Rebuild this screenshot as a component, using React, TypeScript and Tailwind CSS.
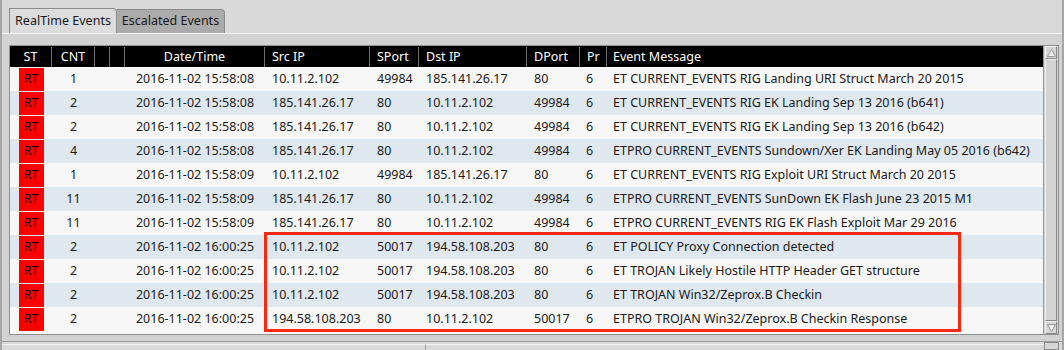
const rows = [
  ['1', '2016-11-02 15:58:08', '10.11.2.102', '49984', '185.141.26.17', '80', '6', 'ET CURRENT_EVENTS RIG Landing URI Struct March 20 2015'],
  ['2', '2016-11-02 15:58:08', '185.141.26.17', '80', '10.11.2.102', '49984', '6', 'ET CURRENT_EVENTS RIG EK Landing Sep 13 2016 (b641)'],
  ['2', '2016-11-02 15:58:08', '185.141.26.17', '80', '10.11.2.102', '49984', '6', 'ET CURRENT_EVENTS RIG EK Landing Sep 13 2016 (b642)'],
  ['4', '2016-11-02 15:58:08', '185.141.26.17', '80', '10.11.2.102', '49984', '6', 'ETPRO CURRENT_EVENTS Sundown/Xer EK Landing May 05 2016 (b642)'],
  ['1', '2016-11-02 15:58:09', '10.11.2.102', '49984', '185.141.26.17', '80', '6', 'ET CURRENT_EVENTS RIG Exploit URI Struct March 20 2015'],
  ['11', '2016-11-02 15:58:09', '185.141.26.17', '80', '10.11.2.102', '49984', '6', 'ETPRO CURRENT_EVENTS SunDown EK Flash June 23 2015 M1'],
  ['11', '2016-11-02 15:58:09', '185.141.26.17', '80', '10.11.2.102', '49984', '6', 'ETPRO CURRENT_EVENTS RIG EK Flash Exploit Mar 29 2016'],
  ['2', '2016-11-02 16:00:25', '10.11.2.102', '50017', '194.58.108.203', '80', '6', 'ET POLICY Proxy Connection detected'],
  ['2', '2016-11-02 16:00:25', '10.11.2.102', '50017', '194.58.108.203', '80', '6', 'ET TROJAN Likely Hostile HTTP Header GET structure'],
  ['2', '2016-11-02 16:00:25', '10.11.2.102', '50017', '194.58.108.203', '80', '6', 'ET TROJAN Win32/Zeprox.B Checkin'],
  ['2', '2016-11-02 16:00:25', '194.58.108.203', '80', '10.11.2.102', '50017', '6', 'ETPRO TROJAN Win32/Zeprox.B Checkin Response'],
];

const cols = 'grid grid-cols-[42px_43px_14px_16px_140px_105px_49px_108px_53px_27px_1fr]';

function HeaderCell({ children, center }: { children?: React.ReactNode; center?: boolean }) {
  return (
    <div className={`h-full flex items-center border-r border-[#6e6e6e] ${center ? 'justify-center' : 'px-[7px]'}`}>
      {children}
    </div>
  );
}

export default function App() {
  return (
    <div
      className="w-[1064px] h-[350px] overflow-hidden bg-[#d9d9d9] border-x-2 border-[#a6a6a6] flex flex-col text-[12.5px] text-[#1a1a1a]"
      style={{ fontFamily: '"Noto Sans", "DejaVu Sans", sans-serif' }}
    >
      {/* Tabs */}
      <div className="flex items-end pt-[8px] pl-[7px] h-[33px] shrink-0">
        <div className="h-[25px] w-[108px] bg-[#dcdcdc] border border-b-0 border-[#8c8c8c] rounded-tr-[4px] flex items-center justify-center">
          RealTime Events
        </div>
        <div className="h-[24px] w-[108px] bg-[#ababab] border border-b-0 border-l-0 border-[#8c8c8c] rounded-tr-[4px] flex items-center justify-center">
          Escalated Events
        </div>
      </div>

      {/* Tab pane */}
      <div className="h-[308px] shrink-0 border-t border-[#f4f4f4] bg-[#d2d2d2] pt-[11px] pl-[7px] pr-[3px] pb-[6px] flex flex-col">
        <div className="flex h-[291px] border border-[#8e8e8e] relative">
          {/* Table */}
          <div className="flex-1 bg-[#f7f7f7] flex flex-col">
            <div className={`${cols} h-[21px] bg-black text-white border-t border-[#000]`}>
              <HeaderCell center>ST</HeaderCell>
              <HeaderCell center>CNT</HeaderCell>
              <HeaderCell />
              <HeaderCell />
              <HeaderCell center>Date/Time</HeaderCell>
              <HeaderCell>Src IP</HeaderCell>
              <HeaderCell>SPort</HeaderCell>
              <HeaderCell>Dst IP</HeaderCell>
              <HeaderCell>DPort</HeaderCell>
              <HeaderCell>Pr</HeaderCell>
              <div className="h-full flex items-center px-[6px]">Event Message</div>
            </div>
            {rows.map((r, i) => (
              <div
                key={i}
                className={`${cols} h-[24px] items-center whitespace-nowrap ${i % 2 === 0 ? 'bg-[#f7f7f7]' : 'bg-[#dfe7ef]'}`}
              >
                <div className="flex justify-center">
                  <span className="w-[25px] h-[23px] bg-[#ff0000] text-black flex items-center justify-center">RT</span>
                </div>
                <div className="text-center">{r[0]}</div>
                <div />
                <div />
                <div className="text-center">{r[1]}</div>
                <div className="px-[7px]">{r[2]}</div>
                <div className="px-[7px]">{r[3]}</div>
                <div className="px-[7px]">{r[4]}</div>
                <div className="px-[7px]">{r[5]}</div>
                <div className="px-[6px]">{r[6]}</div>
                <div className="px-[6px]">{r[7]}</div>
              </div>
            ))}
          </div>

          {/* Vertical scrollbar */}
          <div className="w-[15px] bg-[#d2d2d2] flex flex-col border-l border-[#9a9a9a] px-px">
            <div className="h-[13px] border border-[#f0f0f0] border-r-[#8a8a8a] border-b-[#8a8a8a] flex items-center justify-center bg-[#d6d6d6]">
              <svg width="9" height="8" viewBox="0 0 9 8">
                <path d="M4.5 0.5 L8.5 7.5 L0.5 7.5 Z" fill="#f4f4f4" stroke="#9a9a9a" strokeWidth="1" />
              </svg>
            </div>
            <div className="flex-1 border border-[#f0f0f0] border-r-[#8a8a8a] border-b-[#8a8a8a] bg-[#d4d4d4]" />
            <div className="h-[13px] border border-[#f0f0f0] border-r-[#8a8a8a] border-b-[#8a8a8a] flex items-center justify-center bg-[#d6d6d6]">
              <svg width="9" height="8" viewBox="0 0 9 8">
                <path d="M0.5 0.5 L8.5 0.5 L4.5 7.5 Z" fill="#f4f4f4" stroke="#9a9a9a" strokeWidth="1" />
              </svg>
            </div>
          </div>

          {/* Highlight box */}
          <div className="absolute left-[254px] top-[186px] w-[697px] h-[100px] border-[3px] border-[#f52a10]" />
        </div>
      </div>

      {/* Bottom strip */}
      <div className="flex-1 border-t border-[#9c9c9c] flex">
        <div className="w-[424px] border-t border-[#f4f4f4] border-r border-r-[#9c9c9c] mt-[2px]" />
        <div className="flex-1 border-t border-[#f4f4f4] mt-[2px]" />
        <div className="w-[15px] border border-[#8a8a8a] bg-[#d6d6d6] mr-[3px]" />
      </div>
    </div>
  );
}
